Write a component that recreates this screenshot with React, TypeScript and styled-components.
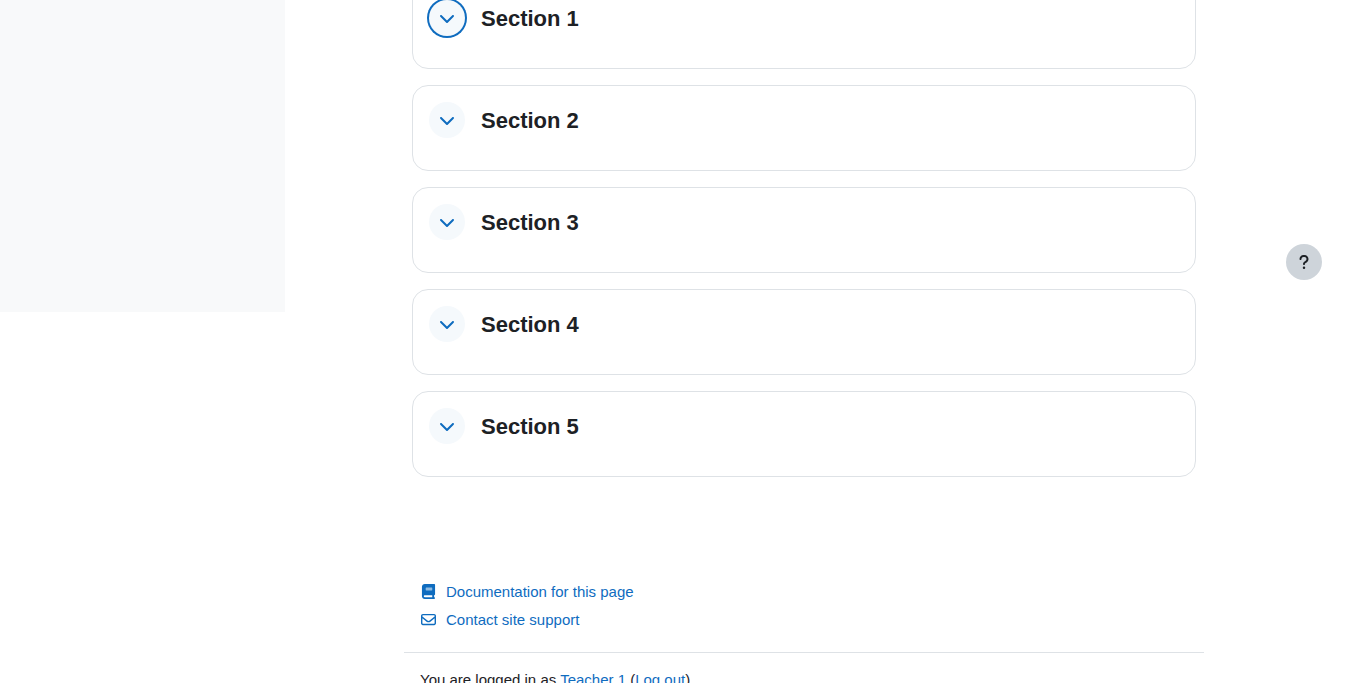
import React from "react";
import styled, { createGlobalStyle } from "styled-components";
import { FaChevronDown, FaQuestion, FaRegEnvelope } from "react-icons/fa6";

const GlobalStyle = createGlobalStyle`
  *, *::before, *::after { box-sizing: border-box; }
  body {
    margin: 0;
    background: #fff;
    color: #1d2125;
    font-family: "Liberation Sans", Arial, sans-serif;
    font-size: 15px;
    line-height: 22px;
  }
`;

const Page = styled.div`
  display: flex;
  align-items: flex-start;
  height: 100vh;
  overflow: hidden;
`;

const Drawer = styled.aside`
  flex: 0 0 285px;
  height: 312px;
  background: #f8f9fa;
`;

const Main = styled.div`
  flex: 1;
  min-width: 0;
  padding-right: 43px;
`;

const Column = styled.div`
  max-width: 800px;
  margin: 0 auto;
`;

const SectionList = styled.ul`
  display: flex;
  flex-direction: column;
  gap: 16px;
  margin: -17px 0 0;
  padding: 0 8px;
  list-style: none;
`;

const SectionCard = styled.li`
  padding: 16px 16px 32px;
  border: 1px solid #dee2e6;
  border-radius: 16px;
`;

const SectionHeader = styled.div`
  display: flex;
  align-items: center;
  gap: 16px;
  height: 36px;
`;

const ToggleButton = styled.button<{ $focused?: boolean }>`
  display: flex;
  align-items: center;
  justify-content: center;
  width: 36px;
  height: 36px;
  padding: 0;
  border: 0;
  border-radius: 50%;
  background: #f5f9fc;
  color: #0f6cbf;
  font-size: 16px;
  cursor: pointer;
  outline: none;
  box-shadow: ${(p) => (p.$focused ? "0 0 0 2px #0f6cbf" : "none")};
`;

const SectionTitle = styled.h3`
  margin: 0;
  font-size: 22px;
  line-height: 37px;
  font-weight: 700;
`;

const Footer = styled.footer`
  padding-top: 101px;
`;

const FooterLinks = styled.div`
  display: flex;
  flex-direction: column;
  align-items: flex-start;
  padding: 0 16px 18px;
  border-bottom: 1px solid #dee2e6;
`;

const Link = styled.a`
  color: #0f6cbf;
  text-decoration: none;
`;

const IconLink = styled(Link)`
  display: flex;
  align-items: center;
  gap: 9px;
  line-height: 28px;
`;

const LinkIcon = styled.span`
  display: flex;
  align-items: flex-start;
  justify-content: center;
  width: 17px;
  height: 16px;
  font-size: 15px;
`;

const LoginInfo = styled.div`
  padding: 16px;
`;

const HelpButton = styled.button`
  position: fixed;
  top: 244px;
  right: 44px;
  display: flex;
  align-items: center;
  justify-content: center;
  width: 36px;
  height: 36px;
  padding: 0;
  border: 0;
  border-radius: 50%;
  background: #ced4da;
  color: #1d2125;
  font-size: 16px;
  cursor: pointer;
`;

const BookIcon = () => (
  <svg viewBox="0 0 448 512" width="15" height="15" fill="currentColor" aria-hidden="true">
    <path
      fillRule="evenodd"
      d="M96 0C43 0 0 43 0 96v320c0 53 43 96 96 96h320c17.700 0 32-14.300 32-32s-14.300-32-32-32v-64c17.700 0 32-14.300 32-32V32c0-17.700-14.300-32-32-32H96zm0 384h256v64H96c-17.700 0-32-14.300-32-32s14.300-32 32-32z"
    />
    <rect x="128" y="120" width="224" height="104" rx="16" fill="#8fbbe2" />
  </svg>
);

const sections = ["Section 1", "Section 2", "Section 3", "Section 4", "Section 5"];

export default function App() {
  return (
    <>
      <GlobalStyle />
      <Page>
        <Drawer />
        <Main>
          <Column>
            <SectionList>
              {sections.map((name, i) => (
                <SectionCard key={name}>
                  <SectionHeader>
                    <ToggleButton type="button" $focused={i === 0} aria-expanded aria-label={`Collapse ${name}`}>
                      <FaChevronDown />
                    </ToggleButton>
                    <SectionTitle>{name}</SectionTitle>
                  </SectionHeader>
                </SectionCard>
              ))}
            </SectionList>
            <Footer>
              <FooterLinks>
                <IconLink href="#docs">
                  <LinkIcon><BookIcon /></LinkIcon>
                  Documentation for this page
                </IconLink>
                <IconLink href="#support">
                  <LinkIcon><FaRegEnvelope /></LinkIcon>
                  Contact site support
                </IconLink>
              </FooterLinks>
              <LoginInfo>
                You are logged in as <Link href="#profile">Teacher 1</Link> (<Link href="#logout">Log out</Link>)
              </LoginInfo>
            </Footer>
          </Column>
        </Main>
        <HelpButton type="button" aria-label="Show footer">
          <FaQuestion />
        </HelpButton>
      </Page>
    </>
  );
}
